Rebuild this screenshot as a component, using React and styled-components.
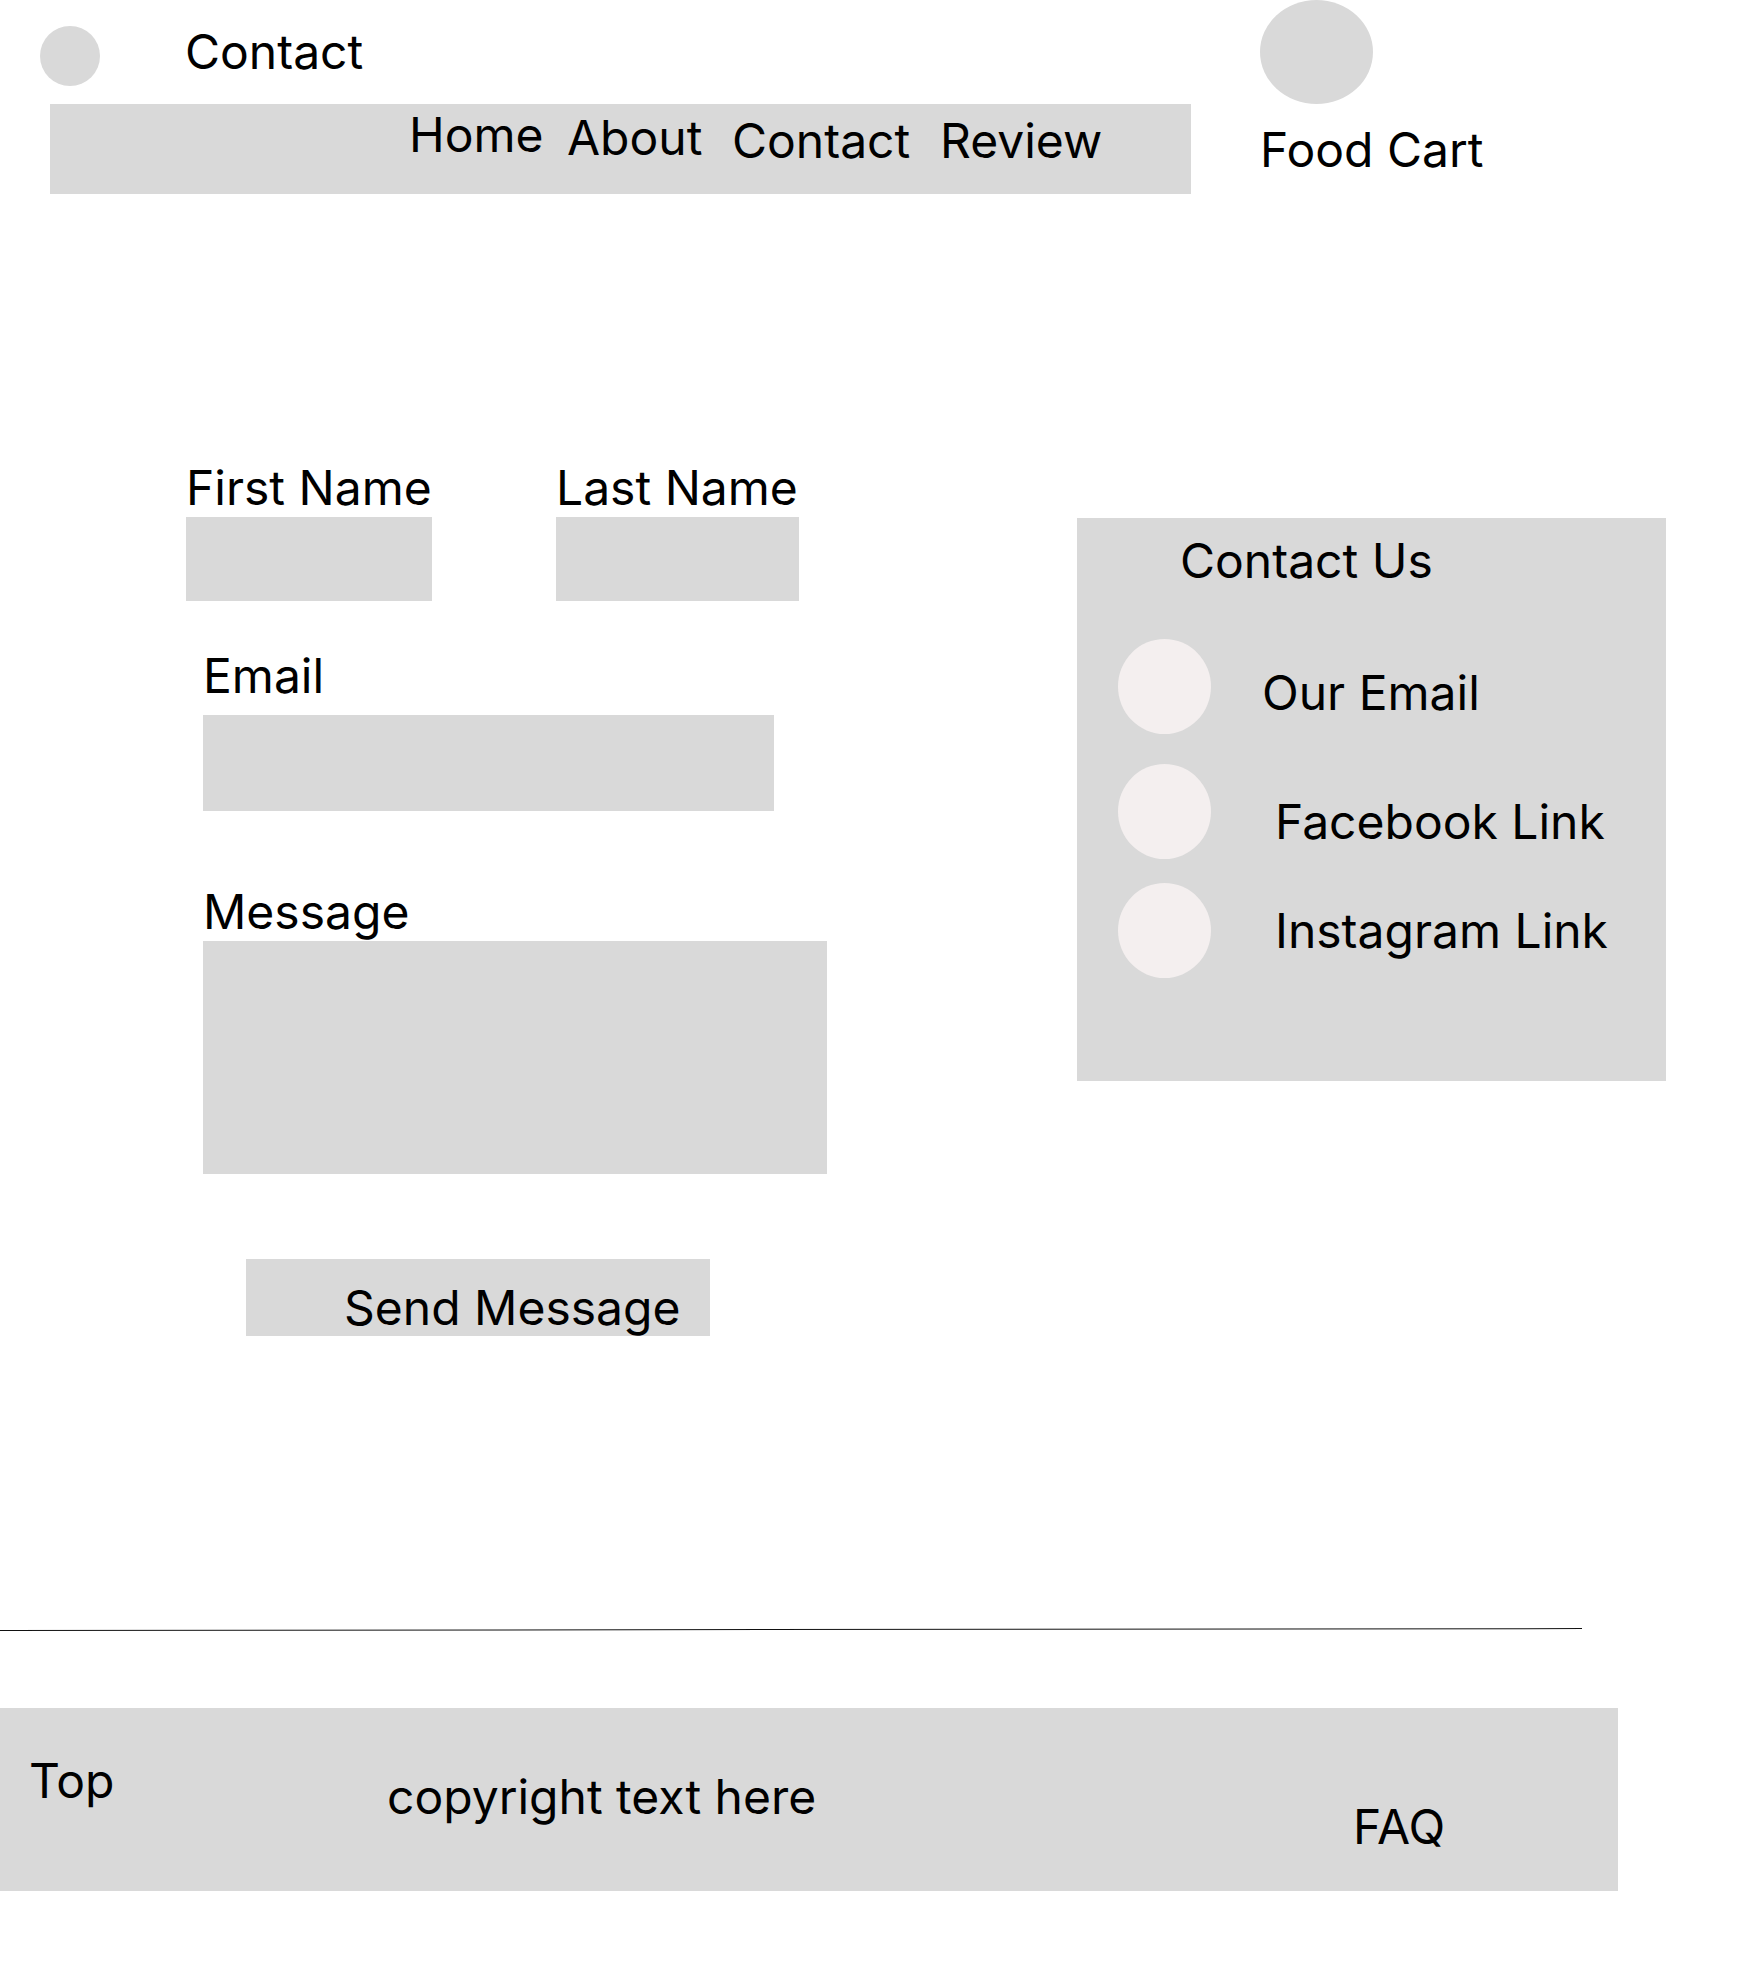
import React from "react";
import styled, { createGlobalStyle } from "styled-components";

const GlobalStyle = createGlobalStyle`
  * {
    box-sizing: border-box;
  }

  body {
    margin: 0;
    background: #fff;
    color: #000;
    font-family: Inter, "Noto Sans", sans-serif;
  }
`;

const Page = styled.div`
  width: 1750px;
  min-height: 1985px;
  font-size: 48px;
  font-weight: 400;
  line-height: 58px;
  overflow: hidden;
`;

/* header */

const Header = styled.header`
  display: flex;
  align-items: flex-start;
`;

const Brand = styled.div`
  display: flex;
  flex-direction: column;
  padding-left: 40px;
`;

const BrandRow = styled.div`
  display: flex;
  align-items: flex-start;
  height: 104px;
  padding-top: 23px;
`;

const Logo = styled.div`
  width: 60px;
  height: 60px;
  margin-top: 3px;
  border-radius: 50%;
  background: #d9d9d9;
`;

const PageTitle = styled.h1`
  margin: 0 0 0 85px;
  font-size: 48px;
  font-weight: 400;
  line-height: 58px;
`;

const NavBar = styled.nav`
  display: grid;
  grid-template-columns: 158px 165px 208px auto;
  align-items: start;
  width: 1141px;
  height: 90px;
  margin-left: 10px;
  padding-left: 359px;
  background: #d9d9d9;
`;

const NavLink = styled.a`
  margin-top: ${(p) => p.$drop}px;
  color: inherit;
  text-decoration: none;
  white-space: nowrap;
`;

const Cart = styled.div`
  display: flex;
  flex-direction: column;
  margin-left: 69px;
`;

const CartIcon = styled.div`
  width: 113px;
  height: 104px;
  border-radius: 50%;
  background: #d9d9d9;
`;

const CartLabel = styled.span`
  margin-top: 17px;
  white-space: nowrap;
`;

/* main */

const Main = styled.main`
  display: flex;
  align-items: flex-start;
  margin-top: 265px;
`;

const ContactForm = styled.form`
  display: flex;
  flex-direction: column;
  align-items: flex-start;
  width: 1078px;
  padding-left: 186px;
`;

const NameRow = styled.div`
  display: flex;
  gap: 124px;
`;

const Field = styled.label`
  display: flex;
  flex-direction: column;
  margin-top: ${(p) => p.$top || 0}px;
  margin-left: ${(p) => p.$left || 0}px;
`;

const FieldLabel = styled.span`
  margin-bottom: ${(p) => p.$gap || 0}px;
  white-space: nowrap;
`;

const Input = styled.input`
  display: block;
  width: ${(p) => p.$w}px;
  height: ${(p) => p.$h}px;
  border: 0;
  border-radius: 0;
  background: #d9d9d9;
  outline: none;
`;

const TextArea = styled.textarea`
  display: block;
  width: 624px;
  height: 233px;
  border: 0;
  border-radius: 0;
  background: #d9d9d9;
  resize: none;
  outline: none;
`;

const SendButton = styled.button`
  width: 464px;
  height: 77px;
  margin: 85px 0 0 60px;
  padding: 20px 0 0 98px;
  border: 0;
  background: #d9d9d9;
  color: #000;
  font: inherit;
  line-height: 58px;
  text-align: left;
  white-space: nowrap;
  overflow: visible;
`;

const Panel = styled.aside`
  width: 589px;
  height: 563px;
  margin-top: 59px;
  margin-left: -1px;
  background: #d9d9d9;
`;

const PanelTitle = styled.h2`
  margin: 14px 0 0 103px;
  font-size: 48px;
  font-weight: 400;
  line-height: 58px;
`;

const ContactRow = styled.div`
  display: flex;
  align-items: flex-start;
  margin-top: ${(p) => p.$top}px;
  padding-left: 41px;
`;

const Dot = styled.span`
  flex: none;
  width: 93px;
  height: 95px;
  border-radius: 50%;
  background: #f4efef;
`;

const RowLabel = styled.a`
  margin: ${(p) => p.$offset}px 0 0 ${(p) => p.$indent}px;
  color: inherit;
  text-decoration: none;
  white-space: nowrap;
`;

/* footer */

const Divider = styled.hr`
  width: 1582px;
  margin: 294px 0 0;
  border: 0;
  border-top: 1px solid #111;
  transform: rotate(-0.07deg);
  transform-origin: left center;
`;

const Footer = styled.footer`
  display: grid;
  grid-template-columns: 358px 966px auto;
  align-items: start;
  width: 1618px;
  height: 183px;
  margin-top: 77px;
  padding-left: 29px;
  background: #d9d9d9;
`;

const FooterItem = styled.span`
  margin-top: ${(p) => p.$top}px;
  white-space: nowrap;
`;

const navItems = [
  { label: "Home", drop: 2 },
  { label: "About", drop: 5 },
  { label: "Contact", drop: 8 },
  { label: "Review", drop: 8 },
];

const contactItems = [
  { label: "Our Email", top: 49, indent: 51, offset: 25 },
  { label: "Facebook Link", top: 30, indent: 64, offset: 29 },
  { label: "Instagram Link", top: 24, indent: 64, offset: 19 },
];

export default function App() {
  return (
    <Page>
      <GlobalStyle />
      <Header>
        <Brand>
          <BrandRow>
            <Logo />
            <PageTitle>Contact</PageTitle>
          </BrandRow>
          <NavBar>
            {navItems.map((item) => (
              <NavLink key={item.label} href="#" $drop={item.drop}>
                {item.label}
              </NavLink>
            ))}
          </NavBar>
        </Brand>
        <Cart>
          <CartIcon />
          <CartLabel>Food Cart</CartLabel>
        </Cart>
      </Header>

      <Main>
        <ContactForm onSubmit={(e) => e.preventDefault()}>
          <NameRow>
            <Field>
              <FieldLabel>First Name</FieldLabel>
              <Input $w={246} $h={84} />
            </Field>
            <Field>
              <FieldLabel>Last Name</FieldLabel>
              <Input $w={243} $h={84} />
            </Field>
          </NameRow>
          <Field $top={46} $left={17}>
            <FieldLabel $gap={10}>Email</FieldLabel>
            <Input type="email" $w={571} $h={96} />
          </Field>
          <Field $top={72} $left={17}>
            <FieldLabel>Message</FieldLabel>
            <TextArea />
          </Field>
          <SendButton type="submit">Send Message</SendButton>
        </ContactForm>

        <Panel>
          <PanelTitle>Contact Us</PanelTitle>
          {contactItems.map((item) => (
            <ContactRow key={item.label} $top={item.top}>
              <Dot />
              <RowLabel href="#" $indent={item.indent} $offset={item.offset}>
                {item.label}
              </RowLabel>
            </ContactRow>
          ))}
        </Panel>
      </Main>

      <Divider />
      <Footer>
        <FooterItem $top={44}>Top</FooterItem>
        <FooterItem $top={60}>copyright text here</FooterItem>
        <FooterItem $top={90}>FAQ</FooterItem>
      </Footer>
    </Page>
  );
}
